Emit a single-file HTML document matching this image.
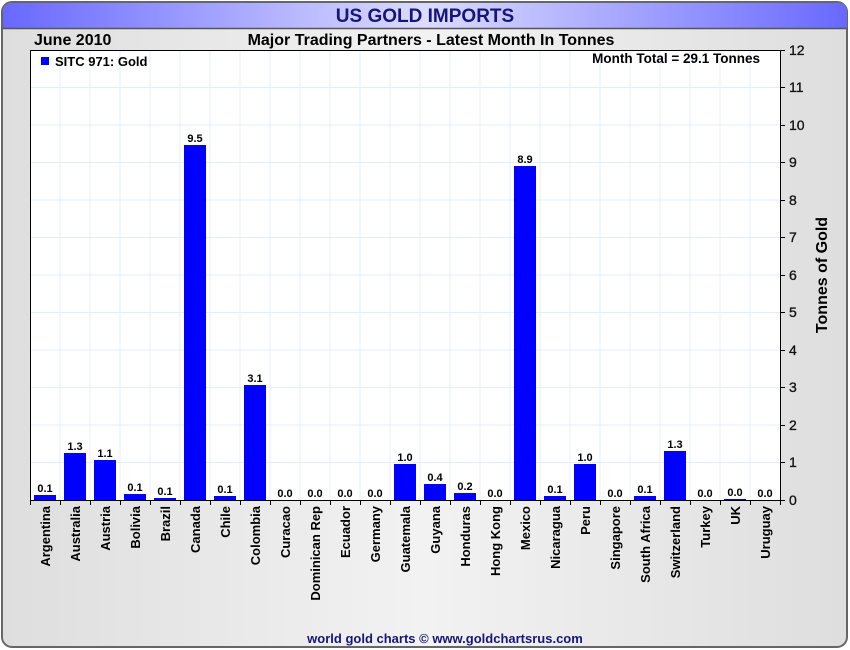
<!DOCTYPE html>
<html><head><meta charset="utf-8"><style>
html,body{margin:0;padding:0;width:850px;height:650px;overflow:hidden;background:#fff}
</style></head><body>
<svg width="850" height="650" xmlns="http://www.w3.org/2000/svg" font-family="Liberation Sans, Arial, sans-serif">
<defs>
<linearGradient id="hd" x1="0" x2="1" y1="0" y2="0">
<stop offset="0" stop-color="#6868ff"/><stop offset="0.5" stop-color="#dcdcff"/><stop offset="1" stop-color="#6868ff"/>
</linearGradient>
<linearGradient id="bg" x1="0" x2="1" y1="0" y2="0">
<stop offset="0" stop-color="#dedede"/><stop offset="0.5" stop-color="#f2f2f2"/><stop offset="1" stop-color="#dedede"/>
</linearGradient>
</defs>
<rect x="2" y="2" width="845" height="645" rx="10" fill="url(#bg)" stroke="#666" stroke-width="2"/>
<path d="M3,28 V12 Q3,3 12,3 H838 Q847,3 847,12 V28 Z" fill="url(#hd)"/>
<line x1="3" y1="28.5" x2="847" y2="28.5" stroke="#555" stroke-width="1.5"/>
<text x="425" y="22" text-anchor="middle" font-weight="bold" font-size="19" fill="#16167a">US GOLD IMPORTS</text>
<text x="34" y="45" font-weight="bold" font-size="16" fill="#000">June 2010</text>
<text x="431" y="45" text-anchor="middle" font-weight="bold" font-size="16" fill="#000">Major Trading Partners - Latest Month In Tonnes</text>
<rect x="30.5" y="50.5" width="750" height="450" fill="#fff" stroke="#000"/>
<g stroke="#e3eff8" stroke-width="1">
<path d="M60,51V500M90,51V500M120,51V500M150,51V500M180,51V500M210,51V500M240,51V500M270,51V500M300,51V500M330,51V500M360,51V500M390,51V500M420,51V500M450,51V500M480,51V500M510,51V500M540,51V500M570,51V500M600,51V500M630,51V500M660,51V500M690,51V500M720,51V500M750,51V500"/>
<path d="M31,462.5H780M31,425H780M31,387.5H780M31,350H780M31,312.5H780M31,275H780M31,237.5H780M31,200H780M31,162.5H780M31,125H780M31,87.5H780"/>
</g>
<rect x="41" y="57" width="8" height="8" fill="#00f"/>
<text x="55" y="66" font-weight="bold" font-size="13" fill="#000">SITC 971: Gold</text>
<text x="760" y="63" text-anchor="end" font-weight="bold" font-size="13.5" fill="#000">Month Total = 29.1 Tonnes</text>
<g fill="#0000ff">
<rect x="34" y="495" width="22" height="5"/>
<rect x="64" y="453" width="22" height="47"/>
<rect x="94" y="460" width="22" height="40"/>
<rect x="124" y="494" width="22" height="6"/>
<rect x="154" y="498" width="22" height="2"/>
<rect x="184" y="145" width="22" height="355"/>
<rect x="214" y="496" width="22" height="4"/>
<rect x="244" y="385" width="22" height="115"/>
<rect x="394" y="464" width="22" height="36"/>
<rect x="424" y="484" width="22" height="16"/>
<rect x="454" y="493" width="22" height="7"/>
<rect x="514" y="166" width="22" height="334"/>
<rect x="544" y="496" width="22" height="4"/>
<rect x="574" y="464" width="22" height="36"/>
<rect x="634" y="496" width="22" height="4"/>
<rect x="664" y="451" width="22" height="49"/>
<rect x="724" y="499" width="22" height="1"/>
</g>
<g font-weight="bold" font-size="11" fill="#000" text-anchor="middle">
<text x="45" y="492">0.1</text><text x="75" y="450">1.3</text><text x="105" y="457">1.1</text>
<text x="135" y="491">0.1</text><text x="165" y="495">0.1</text><text x="195" y="142">9.5</text>
<text x="225" y="493">0.1</text><text x="255" y="382">3.1</text><text x="285" y="497">0.0</text>
<text x="315" y="497">0.0</text><text x="345" y="497">0.0</text><text x="375" y="497">0.0</text>
<text x="405" y="461">1.0</text><text x="435" y="481">0.4</text><text x="465" y="490">0.2</text>
<text x="495" y="497">0.0</text><text x="525" y="163">8.9</text><text x="555" y="493">0.1</text>
<text x="585" y="461">1.0</text><text x="615" y="497">0.0</text><text x="645" y="493">0.1</text>
<text x="675" y="448">1.3</text><text x="705" y="497">0.0</text><text x="735" y="496">0.0</text>
<text x="765" y="497">0.0</text>
</g>
<line x1="30" y1="500.5" x2="781" y2="500.5" stroke="#000"/>
<line x1="780.5" y1="50" x2="780.5" y2="501" stroke="#000"/>
<g stroke="#000">
<path d="M30.5,500V505M60.5,500V505M90.5,500V505M120.5,500V505M150.5,500V505M180.5,500V505M210.5,500V505M240.5,500V505M270.5,500V505M300.5,500V505M330.5,500V505M360.5,500V505M390.5,500V505M420.5,500V505M450.5,500V505M480.5,500V505M510.5,500V505M540.5,500V505M570.5,500V505M600.5,500V505M630.5,500V505M660.5,500V505M690.5,500V505M720.5,500V505M750.5,500V505M780.5,500V505"/>
<path d="M780,500.5H785M780,462.5H785M780,425.5H785M780,387.5H785M780,350.5H785M780,312.5H785M780,275.5H785M780,237.5H785M780,200.5H785M780,162.5H785M780,125.5H785M780,87.5H785M780,50.5H785"/>
</g>
<g font-size="14" fill="#111" stroke="#111" stroke-width="0.3">
<text x="789" y="505">0</text><text x="789" y="467">1</text><text x="789" y="430">2</text>
<text x="789" y="392">3</text><text x="789" y="355">4</text><text x="789" y="317">5</text>
<text x="789" y="280">6</text><text x="789" y="242">7</text><text x="789" y="205">8</text>
<text x="789" y="167">9</text><text x="789" y="130">10</text><text x="789" y="92">11</text>
<text x="789" y="55">12</text>
</g>
<text transform="translate(827,275) rotate(-90)" text-anchor="middle" font-weight="bold" font-size="16" fill="#000">Tonnes of Gold</text>
<g font-weight="bold" font-size="13" fill="#000" text-anchor="end">
<text transform="translate(50,506) rotate(-90)">Argentina</text>
<text transform="translate(80,506) rotate(-90)">Australia</text>
<text transform="translate(110,506) rotate(-90)">Austria</text>
<text transform="translate(140,506) rotate(-90)">Bolivia</text>
<text transform="translate(170,506) rotate(-90)">Brazil</text>
<text transform="translate(200,506) rotate(-90)">Canada</text>
<text transform="translate(230,506) rotate(-90)">Chile</text>
<text transform="translate(260,506) rotate(-90)">Colombia</text>
<text transform="translate(290,506) rotate(-90)">Curacao</text>
<text transform="translate(320,506) rotate(-90)">Dominican Rep</text>
<text transform="translate(350,506) rotate(-90)">Ecuador</text>
<text transform="translate(380,506) rotate(-90)">Germany</text>
<text transform="translate(410,506) rotate(-90)">Guatemala</text>
<text transform="translate(440,506) rotate(-90)">Guyana</text>
<text transform="translate(470,506) rotate(-90)">Honduras</text>
<text transform="translate(500,506) rotate(-90)">Hong Kong</text>
<text transform="translate(530,506) rotate(-90)">Mexico</text>
<text transform="translate(560,506) rotate(-90)">Nicaragua</text>
<text transform="translate(590,506) rotate(-90)">Peru</text>
<text transform="translate(620,506) rotate(-90)">Singapore</text>
<text transform="translate(650,506) rotate(-90)">South Africa</text>
<text transform="translate(680,506) rotate(-90)">Switzerland</text>
<text transform="translate(710,506) rotate(-90)">Turkey</text>
<text transform="translate(740,506) rotate(-90)">UK</text>
<text transform="translate(770,506) rotate(-90)">Uruguay</text>
</g>
<text x="445" y="643" text-anchor="middle" font-weight="bold" font-size="13" fill="#16167a">world gold charts © www.goldchartsrus.com</text>
</svg>
</body></html>
